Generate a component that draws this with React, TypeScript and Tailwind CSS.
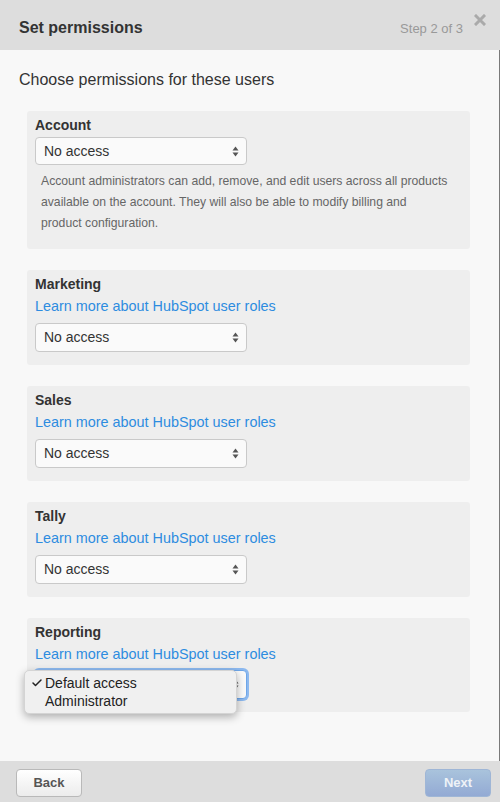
import { Check } from 'lucide-react';

const SECTIONS = ['Marketing', 'Sales', 'Tally'];

function SelectArrows() {
  return (
    <svg width="7" height="11" viewBox="0 0 7 11" className="shrink-0">
      <path d="M3.5 0.5 L6.5 4.5 L0.5 4.5 Z" fill="#555" />
      <path d="M3.5 10.5 L6.5 6.5 L0.5 6.5 Z" fill="#555" />
    </svg>
  );
}

function FakeSelect({ value, h = 'h-[29px]', focused = false }: { value: string; h?: string; focused?: boolean }) {
  return (
    <div
      className={`flex w-[212px] ${h} items-center justify-between rounded-[4px] border bg-[#fafafa] pl-[8px] pr-[7px] text-[14px] text-[#333] ${
        focused ? 'border-[#6ea6e8] shadow-[0_0_0_2px_#8db9ef]' : 'border-[#c9c9c9]'
      }`}
    >
      <span>{value}</span>
      <SelectArrows />
    </div>
  );
}

function Panel({ title, children }: { title: string; children: React.ReactNode }) {
  return (
    <div className="ml-2 mr-[10px] rounded-[3px] bg-[#eeeeee] px-2 pt-1 pb-[13px]">
      <div className="text-[14px] font-bold leading-[20px] text-[#333]">{title}</div>
      {children}
    </div>
  );
}

export default function App() {
  return (
    <div
      className="flex h-[802px] w-[500px] flex-col bg-[#f8f8f8]"
      style={{ fontFamily: '"Liberation Sans", Arial, sans-serif' }}
    >
      {/* Header */}
      <div className="flex h-[50px] shrink-0 items-start bg-[#dddddd] pl-[19px] pr-[14px] pt-[18px]">
        <span className="text-[16px] font-bold leading-[20px] text-[#333]">Set permissions</span>
        <span className="ml-auto mt-[2px] text-[13px] leading-[18px] text-[#999]">Step 2 of 3</span>
        <svg width="12" height="12" viewBox="0 0 12 12" className="ml-[11px] mt-[-4px]">
          <path d="M2 2 L10 10 M10 2 L2 10" stroke="#aaa" strokeWidth="3" strokeLinecap="square" />
        </svg>
      </div>

      {/* Body */}
      <div className="flex-1 border-r border-[#7a7a7a] px-[19px] pt-[20px]">
        <div className="text-[16px] leading-[20px] text-[#333]">Choose permissions for these users</div>

        <div className="mt-[21px] flex flex-col gap-[21px]">
          <Panel title="Account">
            <div className="mt-[2px]">
              <FakeSelect value="No access" h="h-[28px]" />
            </div>
            <p className="mt-[6px] pb-[2px] pl-[6px] text-[12.2px] leading-[21px] text-[#666]">
              Account administrators can add, remove, and edit users across all products
              <br />
              available on the account. They will also be able to modify billing and
              <br />
              product configuration.
            </p>
          </Panel>

          {SECTIONS.map((s) => (
            <Panel key={s} title={s}>
              <div className="mt-[2px] text-[14.4px] leading-[20px] text-[#2d8ce0]">Learn more about HubSpot user roles</div>
              <div className="mt-[7px]">
                <FakeSelect value="No access" />
              </div>
            </Panel>
          ))}

          <Panel title="Reporting">
            <div className="mt-[2px] text-[14.4px] leading-[20px] text-[#2d8ce0]">Learn more about HubSpot user roles</div>
            <div className="relative mt-[6px]">
              <FakeSelect value="" focused />
              <div className="absolute left-[-11px] top-[0px] w-[213px] rounded-[5px] border border-[#d4d4d4] bg-[#f0f0f0] py-[3px] text-[14px] leading-[18px] text-[#222] shadow-[0_3px_8px_rgba(0,0,0,0.3)]">
                <div className="flex items-center">
                  <span className="flex w-[20px] justify-end pr-[2px]">
                    <Check size={12} strokeWidth={3} color="#222" />
                  </span>
                  <span>Default access</span>
                </div>
                <div className="flex items-center">
                  <span className="w-[20px]" />
                  <span>Administrator</span>
                </div>
              </div>
            </div>
          </Panel>
        </div>
      </div>

      {/* Footer */}
      <div className="flex h-[41px] shrink-0 items-center justify-between bg-[#dddddd] pl-[16px] pr-[9px]">
        <button className="mt-[2px] h-[28px] w-[66px] rounded-[4px] border border-[#b9b9b9] bg-gradient-to-b from-[#ffffff] to-[#ececec] text-[13px] font-bold text-[#555]">
          Back
        </button>
        <button className="mt-[2px] h-[28px] w-[66px] rounded-[4px] border border-[#9fb6d6] bg-gradient-to-b from-[#a9c3dc] to-[#93aad4] text-[13px] font-bold text-[#eef2f7]">
          Next
        </button>
      </div>
    </div>
  );
}
